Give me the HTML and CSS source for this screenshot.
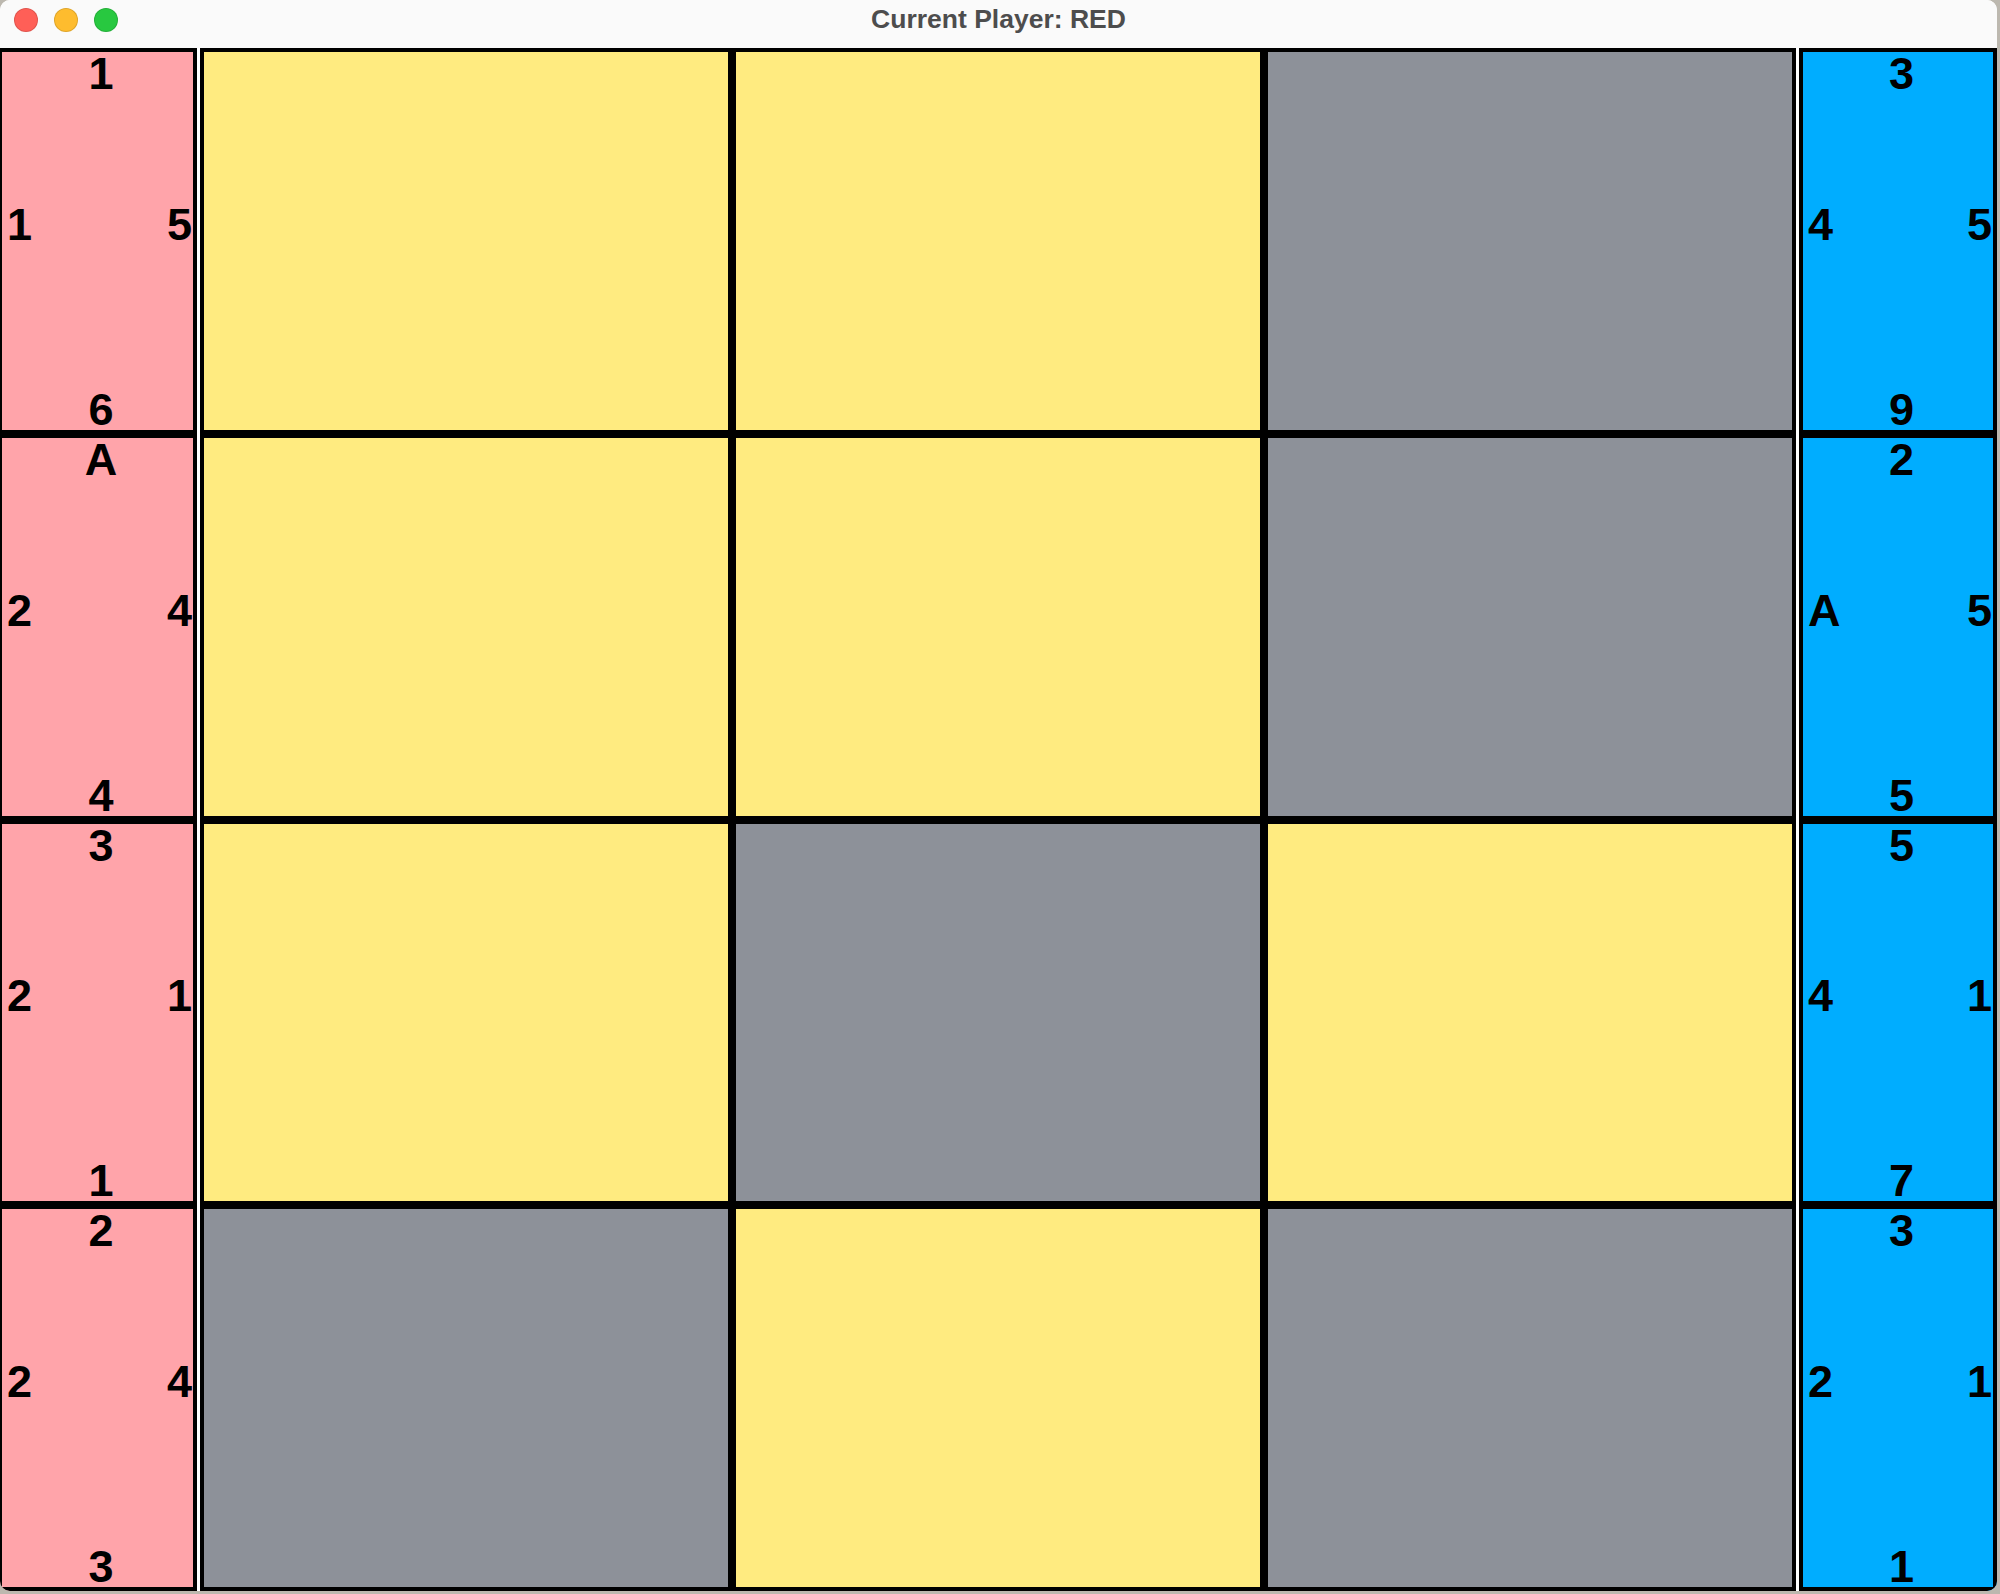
FILE: index.html
```html
<!DOCTYPE html>
<html>
<head>
<meta charset="utf-8">
<title>Current Player: RED</title>
<link rel="stylesheet" href="styles.css">
</head>
<body>
<div class="window">
  <div class="titlebar">
    <div class="lights">
      <span class="light red"></span>
      <span class="light yellow"></span>
      <span class="light green"></span>
    </div>
    <div class="title">Current Player: RED</div>
  </div>
  <div class="content">
    <div class="panel panel-left">
      <div class="card red-card"><div class="n">1</div><div class="mid"><span>1</span><span>5</span></div><div class="s">6</div></div>
      <div class="card red-card"><div class="n">A</div><div class="mid"><span>2</span><span>4</span></div><div class="s">4</div></div>
      <div class="card red-card"><div class="n">3</div><div class="mid"><span>2</span><span>1</span></div><div class="s">1</div></div>
      <div class="card red-card"><div class="n">2</div><div class="mid"><span>2</span><span>4</span></div><div class="s">3</div></div>
    </div>
    <div class="board">
      <div class="tile y"></div><div class="tile y"></div><div class="tile g"></div>
      <div class="tile y"></div><div class="tile y"></div><div class="tile g"></div>
      <div class="tile y"></div><div class="tile g"></div><div class="tile y"></div>
      <div class="tile g"></div><div class="tile y"></div><div class="tile g"></div>
    </div>
    <div class="panel panel-right">
      <div class="card blue-card"><div class="n">3</div><div class="mid"><span>4</span><span>5</span></div><div class="s">9</div></div>
      <div class="card blue-card"><div class="n">2</div><div class="mid"><span>A</span><span>5</span></div><div class="s">5</div></div>
      <div class="card blue-card"><div class="n">5</div><div class="mid"><span>4</span><span>1</span></div><div class="s">7</div></div>
      <div class="card blue-card"><div class="n">3</div><div class="mid"><span>2</span><span>1</span></div><div class="s">1</div></div>
    </div>
  </div>
</div>
</body>
</html>
```
FILE: styles.css
```css
html, body {
  margin: 0;
  padding: 0;
}
body {
  width: 2000px;
  height: 1594px;
  background: #bcb8af;
  overflow: hidden;
}
.window {
  width: 1997px;
  height: 1591px;
  border-radius: 10px;
  overflow: hidden;
  background: #ffffff;
  display: flex;
  flex-direction: column;
}
.titlebar {
  height: 48px;
  flex: 0 0 48px;
  background: #fafafa;
  position: relative;
}
.lights {
  position: absolute;
  left: 14px;
  top: 8px;
  display: flex;
  gap: 16px;
}
.light {
  width: 22px;
  height: 22px;
  border-radius: 50%;
  border: 1px solid rgba(0,0,0,0.12);
}
.light.red { background: #ff5f57; }
.light.yellow { background: #febc2e; }
.light.green { background: #28c840; }
.title {
  text-align: center;
  font-family: "Liberation Sans", Arial, sans-serif;
  font-weight: bold;
  font-size: 26.5px;
  line-height: 38px;
  color: #4d4d4d;
}
.content {
  flex: 1 1 auto;
  display: flex;
  gap: 3px;
  background: #ffffff;
}
.panel {
  display: grid;
  grid-template-rows: repeat(4, 1fr);
  height: 1543px;
}
.panel-left {
  width: 199px;
  margin-left: -2px;
}
.panel-right {
  width: 198px;
}
.card {
  border: 4px solid #000;
  display: grid;
  grid-template-rows: 44px 1fr 44px;
  padding: 0 1px 0 5px;
  min-height: 0;
  font-family: "Liberation Sans", Arial, sans-serif;
  font-weight: bold;
  font-size: 45px;
  line-height: 44px;
  color: #000;
}
.red-card { background: #ffa4aa; }
.blue-card { background: #00adff; }
.card .n, .card .s {
  text-align: center;
  padding-left: 3px;
}
.card .s {
  line-height: 47px;
}
.card .mid {
  display: flex;
  justify-content: space-between;
  align-items: center;
  padding-bottom: 32px;
}
.board {
  width: 1596px;
  height: 1543px;
  display: grid;
  grid-template-columns: repeat(3, 1fr);
  grid-template-rows: repeat(4, 1fr);
}
.tile {
  border: 4px solid #000;
  min-height: 0;
}
.tile.y { background: #ffeb80; }
.tile.g { background: #8d9199; }
```
